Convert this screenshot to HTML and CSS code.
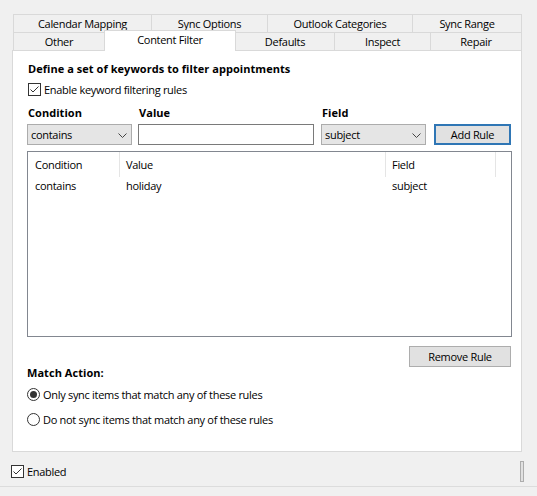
FILE: index.html
```html
<!DOCTYPE html>
<html>
<head>
<meta charset="utf-8">
<link rel="stylesheet" href="styles.css">
</head>
<body>
<div class="tabs">
  <div class="tabrow">
    <div class="tab t-cal">Calendar Mapping</div>
    <div class="tab t-sync">Sync Options</div>
    <div class="tab t-cat">Outlook Categories</div>
    <div class="tab t-range">Sync Range</div>
  </div>
  <div class="tabrow">
    <div class="tab t-other">Other</div>
    <div class="tab t-filter active">Content Filter</div>
    <div class="tab t-def">Defaults</div>
    <div class="tab t-insp">Inspect</div>
    <div class="tab t-rep">Repair</div>
  </div>
</div>
<div class="panel">
  <div class="title">Define a set of keywords to filter appointments</div>
  <div class="check-row">
    <svg class="box" width="13" height="13" viewBox="0 0 13 13"><rect x="0.5" y="0.5" width="12" height="12" fill="#fff" stroke="#333"/><path d="M2.5 6.5 L5 9 L10.5 3.5" fill="none" stroke="#333" stroke-width="1"/></svg>
    <span>Enable keyword filtering rules</span>
  </div>
  <div class="labels">
    <div class="lbl l-cond">Condition</div>
    <div class="lbl l-val">Value</div>
    <div class="lbl">Field</div>
  </div>
  <div class="controls">
    <div class="combo c-cond"><span>contains</span><svg width="9" height="5" viewBox="0 0 9 5"><path d="M0.5 0.5 L4.5 4.5 L8.5 0.5" fill="none" stroke="#444"/></svg></div>
    <div class="textbox"></div>
    <div class="combo c-field"><span>subject</span><svg width="9" height="5" viewBox="0 0 9 5"><path d="M0.5 0.5 L4.5 4.5 L8.5 0.5" fill="none" stroke="#444"/></svg></div>
    <div class="btn btn-default">Add Rule</div>
  </div>
  <div class="list">
    <div class="lrow lhead">
      <div class="cell">Condition</div>
      <div class="cell">Value</div>
      <div class="cell">Field</div>
      <div class="cell"></div>
    </div>
    <div class="lrow litem">
      <div class="cell">contains</div>
      <div class="cell">holiday</div>
      <div class="cell">subject</div>
      <div class="cell"></div>
    </div>
  </div>
  <div class="btn-row"><div class="btn btn-remove">Remove Rule</div></div>
  <div class="title match">Match Action:</div>
  <div class="radio-row r1">
    <svg width="13" height="13" viewBox="0 0 13 13"><circle cx="6.5" cy="6.5" r="6" fill="#fff" stroke="#333"/><circle cx="6.5" cy="6.5" r="3.5" fill="#333"/></svg>
    <span>Only sync items that match any of these rules</span>
  </div>
  <div class="radio-row r2">
    <svg width="13" height="13" viewBox="0 0 13 13"><circle cx="6.5" cy="6.5" r="6" fill="#fff" stroke="#333"/></svg>
    <span>Do not sync items that match any of these rules</span>
  </div>
</div>
<div class="footer">
  <div class="check-row foot-check">
    <svg class="box" width="13" height="13" viewBox="0 0 13 13"><rect x="0.5" y="0.5" width="12" height="12" fill="#fff" stroke="#333"/><path d="M2.5 6.5 L5 9 L10.5 3.5" fill="none" stroke="#333" stroke-width="1"/></svg>
    <span>Enabled</span>
  </div>
  <div class="stub"></div>
</div>
<div class="bottom-edge"></div>
</body>
</html>
```
FILE: styles.css
```css
html, body {
  margin: 0;
  padding: 0;
}
body {
  background: #f0f0f0;
  font-family: "Open Sans", "Noto Sans", sans-serif;
  font-size: 11px;
  letter-spacing: -0.3px;
  color: #000;
  width: 537px;
  height: 496px;
  overflow: hidden;
}
.tabs {
  padding-top: 14px;
  margin-left: 13px;
  width: 509px;
}
.tabrow {
  display: flex;
  height: 18px;
}
.tab {
  box-sizing: border-box;
  height: 18px;
  border: 1px solid #d9d9d9;
  border-bottom: none;
  margin-left: -1px;
  display: flex;
  align-items: center;
  justify-content: center;
  background: #f0f0f0;
  line-height: 16px;
  white-space: nowrap;
}
.tab:first-child { margin-left: 0; }
.t-cal { width: 139px; }
.t-sync { width: 117px; }
.t-cat { width: 146px; }
.t-range { width: 110px; }
.t-other { width: 92px; }
.t-filter { width: 132px; }
.t-def { width: 100px; }
.t-insp { width: 97px; }
.t-rep { width: 92px; }
.tab.active {
  margin-top: -2px;
  height: 21px;
  background: #fff;
  z-index: 1;
  padding-bottom: 2px;
}
.panel {
  box-sizing: border-box;
  margin-left: 12px;
  width: 510px;
  height: 402px;
  border: 1px solid #d9d9d9;
  background: #fff;
  padding: 10px 9px 0 14px;
}
.title {
  font-weight: bold;
  letter-spacing: 0.05px;
  line-height: 16px;
  height: 16px;
  padding-left: 1px;
}
.check-row {
  display: flex;
  align-items: center;
  height: 16px;
  margin-top: 4px;
  padding-left: 1px;
}
.check-row .box { margin-right: 3px; flex: none; }
.labels {
  display: flex;
  height: 16px;
  line-height: 16px;
  margin-top: 8px;
  font-weight: bold;
  letter-spacing: 0.05px;
}
.lbl { padding-left: 1px; }
.l-cond { width: 110px; }
.l-val { width: 182px; }
.controls {
  display: flex;
  height: 21px;
  margin-top: 3px;
}
.combo {
  box-sizing: border-box;
  width: 105px;
  height: 21px;
  background: #e5e5e5;
  border: 1px solid #acacac;
  display: flex;
  align-items: center;
  justify-content: space-between;
  padding: 0 4px 0 3px;
}
.combo svg { margin-top: 1px; }
.textbox {
  box-sizing: border-box;
  width: 176px;
  height: 21px;
  border: 1px solid #7a7a7a;
  background: #fff;
  margin: 0 7px 0 6px;
}
.btn {
  box-sizing: border-box;
  height: 21px;
  background: #e1e1e1;
  border: 1px solid #adadad;
  display: flex;
  align-items: center;
  justify-content: center;
}
.btn-default {
  width: 77px;
  margin-left: 8px;
  border: 2px solid #2f76b5;
}
.list {
  box-sizing: border-box;
  height: 186px;
  margin-top: 6px;
  border: 1px solid #828790;
  background: #fff;
}
.lrow {
  display: grid;
  grid-template-columns: 92px 266px 110px 1fr;
}
.lhead { height: 24px; }
.lhead .cell {
  border-right: 1px solid #e5e5e5;
  line-height: 25px;
}
.lhead .cell:last-child { border-right: none; }
.litem .cell { line-height: 20px; }
.cell { padding-left: 6px; white-space: nowrap; }
.lrow .cell:first-child { padding-left: 7px; }
.btn-row {
  display: flex;
  justify-content: flex-end;
  margin-top: 9px;
  height: 21px;
}
.btn-remove {
  width: 102px;
  margin-right: 1px;
}
.match {
  margin-top: -2px;
  padding-left: 0;
}
.radio-row {
  display: flex;
  align-items: center;
  height: 16px;
}
.radio-row svg { margin-right: 3px; flex: none; }
.r1 { margin-top: 5px; }
.r2 { margin-top: 9px; }
.footer {
  display: flex;
  align-items: center;
  height: 21px;
  margin-top: 9px;
  padding-left: 11px;
  padding-right: 13px;
}
.foot-check { margin-top: 0; padding-left: 0; }
.stub {
  margin-left: auto;
  width: 4px;
  height: 21px;
  box-sizing: border-box;
  border: 1px solid #adadad;
  background: #e1e1e1;
}
.bottom-edge {
  margin-top: 4px;
  height: 1px;
  background: #dcdcdc;
}
```
